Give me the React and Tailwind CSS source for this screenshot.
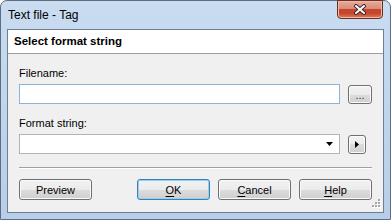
import React from "react";

const font = { fontFamily: '"Liberation Sans", Arial, sans-serif' };

const Btn = ({ children, primary }) => (
  <button
    className={
      "w-[73px] h-[21px] rounded-[3px] border text-[11px] leading-[16px] text-black flex items-center justify-center bg-[linear-gradient(to_bottom,#f2f2f2_0%,#ebebeb_50%,#dddddd_50%,#cfcfcf_100%)] " +
      (primary
        ? "border-[#3c7fb1] shadow-[inset_0_0_0_1px_#8fd3f4]"
        : "border-[#707070] shadow-[inset_0_0_0_1px_#fbfbfb]")
    }
  >
    {children}
  </button>
);

const SmallBtn = ({ w, children }) => (
  <button
    className={
      w +
      " h-[19px] mt-[1px] rounded-[3px] border border-[#707070] bg-[linear-gradient(to_bottom,#f2f2f2_0%,#ebebeb_50%,#dddddd_50%,#cfcfcf_100%)] shadow-[inset_0_0_0_1px_#fbfbfb] flex items-center justify-center"
    }
  >
    {children}
  </button>
);

export default function App() {
  return (
    <div
      style={font}
      className="w-[391px] h-[220px] border border-[#5d6e83] rounded-t-[7px] bg-[linear-gradient(to_bottom,#c9dcf0,#b8cee8)] flex flex-col text-black"
    >
      {/* title bar */}
      <div className="h-[28px] flex justify-between items-start">
        <div className="pl-[7px] pt-[6px] text-[12px] leading-[16px]">Text file - Tag</div>
        <div className="w-[46px] h-[19px] mt-[-1px] mr-[7px] rounded-b-[4px] border border-[#6b3024] bg-[linear-gradient(to_bottom,#e9aa9c_0%,#d98c7b_45%,#c4472d_50%,#c6452c_72%,#e07a5d_100%)] shadow-[inset_0_0_0_1px_#eeb9a8] flex items-center justify-center">
          <svg width="14" height="11" viewBox="0 0 14 11">
            <path d="M3 2 L11 9 M11 2 L3 9" stroke="#3b2b2b" strokeWidth="4" strokeLinecap="round" />
            <path d="M3 2 L11 9 M11 2 L3 9" stroke="#ffffff" strokeWidth="2" strokeLinecap="round" />
          </svg>
        </div>
      </div>

      {/* client */}
      <div className="relative mx-[6px] h-[184px] border border-[#6f7f91] bg-[#f0f0f0] flex flex-col">
        <div className="h-[24px] bg-white border-b border-[#a0a0a0] pl-[6px] pt-[3px] text-[11.5px] leading-[16px] font-bold">
          Select format string
        </div>

        <div className="px-[11px] pt-[11px] flex flex-col text-[11px]">
          <div className="leading-[16px]">Filename:</div>
          <div className="mt-[3px] flex gap-[8px]">
            <div className="w-[321px] h-[20px] border border-[#8fb3d8] bg-white" />
            <SmallBtn w="w-[24px]">
              <span className="text-[11px] leading-[11px] mt-[2px] text-[#333]">...</span>
            </SmallBtn>
          </div>

          <div className="mt-[11px] leading-[16px]">Format string:</div>
          <div className="mt-[3px] flex gap-[8px]">
            <div className="w-[321px] h-[20px] border border-[#b3b3b3] bg-white flex items-center justify-end pr-[6px]">
              <svg width="7" height="4" viewBox="0 0 7 4">
                <path d="M0 0 H7 L3.5 4 Z" fill="#000" />
              </svg>
            </div>
            <SmallBtn w="w-[18px]">
              <svg width="4" height="7" viewBox="0 0 4 7">
                <path d="M0 0 V7 L4 3.5 Z" fill="#000" />
              </svg>
            </SmallBtn>
          </div>

          <div className="mt-[13px] h-[2px] border-t border-[#a0a0a0] border-b border-b-white" />

          <div className="mt-[10px] flex gap-[8px]">
            <Btn>Preview</Btn>
            <div className="flex-1" />
            <Btn primary>
              <span className="underline underline-offset-2">O</span>K
            </Btn>
            <Btn>
              <span className="underline underline-offset-2">C</span>ancel
            </Btn>
            <Btn>
              <span className="underline underline-offset-2">H</span>elp
            </Btn>
          </div>
        </div>

        {/* resize grip */}
        <svg className="absolute right-[2px] bottom-[2px]" width="11" height="11" viewBox="0 0 11 11">
          {[
            [8, 0],
            [5, 3],
            [8, 3],
            [2, 6],
            [5, 6],
            [8, 6],
          ].map(([x, y], i) => (
            <g key={i}>
              <rect x={x + 1} y={y + 1} width="2" height="2" fill="#ffffff" />
              <rect x={x} y={y} width="2" height="2" fill="#a6a6a6" />
            </g>
          ))}
        </svg>
      </div>
    </div>
  );
}
